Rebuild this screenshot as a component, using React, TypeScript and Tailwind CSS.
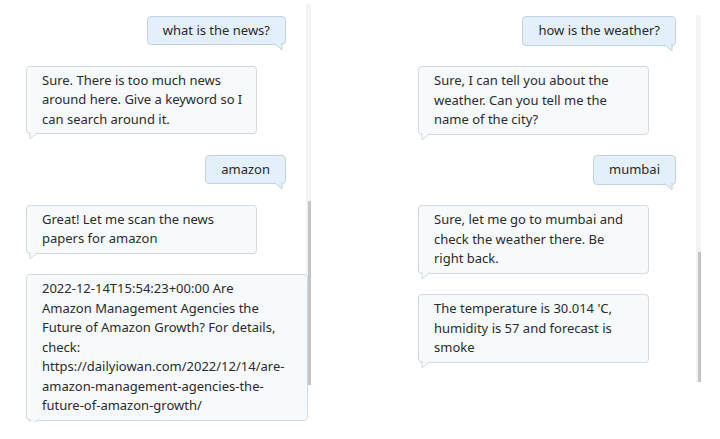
const font = { fontFamily: '"Noto Sans", "Open Sans", Arial, sans-serif' };

type Msg = { from: "user" | "bot"; text: string[]; wide?: boolean };

const newsChat: Msg[] = [
  { from: "user", text: ["what is the news?"] },
  { from: "bot", text: ["Sure. There is too much news", "around here. Give a keyword so I", "can search around it."] },
  { from: "user", text: ["amazon"] },
  { from: "bot", text: ["Great! Let me scan the news", "papers for amazon"] },
  {
    from: "bot",
    wide: true,
    text: [
      "2022-12-14T15:54:23+00:00 Are",
      "Amazon Management Agencies the",
      "Future of Amazon Growth? For details,",
      "check:",
      "https://dailyiowan.com/2022/12/14/are-",
      "amazon-management-agencies-the-",
      "future-of-amazon-growth/",
    ],
  },
];

const weatherChat: Msg[] = [
  { from: "user", text: ["how is the weather?"] },
  { from: "bot", text: ["Sure, I can tell you about the", "weather. Can you tell me the", "name of the city?"] },
  { from: "user", text: ["mumbai"] },
  { from: "bot", text: ["Sure, let me go to mumbai and", "check the weather there. Be", "right back."] },
  { from: "bot", text: ["The temperature is 30.014 'C,", "humidity is 57 and forecast is", "smoke"] },
];

function Tail({ side }: { side: "user" | "bot" }) {
  if (side === "user") {
    return (
      <svg className="absolute -bottom-[7px] right-[1px]" width="10" height="8" viewBox="0 0 10 8">
        <path d="M0 0 L8 7 L8 0 Z" fill="#e3effa" />
        <path d="M0.5 0.5 L8 7 L8 0" fill="none" stroke="#c5d3df" strokeWidth="1" />
      </svg>
    );
  }
  return (
    <svg className="absolute -bottom-[7px] left-[2px]" width="10" height="8" viewBox="0 0 10 8">
      <path d="M1 0 L1 7 L9 0 Z" fill="#f7fafc" />
      <path d="M1 0 L1 7 L9 0.5" fill="none" stroke="#d3d9de" strokeWidth="1" />
    </svg>
  );
}

function Bubble({ msg }: { msg: Msg }) {
  const isUser = msg.from === "user";
  return (
    <div className={isUser ? "flex justify-end pr-[22px]" : "flex justify-start"}>
      <div
        className={
          "relative rounded-[4px] border px-[15px] py-[4px] text-[13px] leading-[19.5px] text-[#2b2b2b] " +
          (isUser
            ? "bg-[#e3effa] border-[#c5d3df]"
            : msg.wide
            ? "w-[283px] bg-[#f7fafc] border-[#d3d9de]"
            : "w-[231px] bg-[#f7fafc] border-[#d3d9de]")
        }
      >
        {msg.text.map((line, i) => (
          <div key={i} className="whitespace-nowrap">
            {line}
          </div>
        ))}
        <Tail side={msg.from} />
      </div>
    </div>
  );
}

function Scrollbar({ top, height, thumb }: { top: string; height: string; thumb: string }) {
  return (
    <div className={"flex w-[5px] flex-col justify-end bg-[#f3f3f3] " + top + " " + height}>
      <div className={"w-[3px] self-end bg-[#c4c4c4] " + thumb} />
    </div>
  );
}

export default function App() {
  return (
    <div className="flex h-[439px] w-[720px] overflow-hidden bg-white" style={font}>
      <div className="flex w-[312px] shrink-0 pl-[26px]">
        <div className="flex h-[422px] w-[282px] flex-col gap-[20.5px] overflow-hidden pt-[15.5px]">
          {newsChat.map((m, i) => (
            <Bubble key={i} msg={m} />
          ))}
        </div>
        <div className="-ml-[2px] flex">
          <Scrollbar top="mt-[4px]" height="h-[381px]" thumb="h-[184px]" />
        </div>
      </div>
      <div className="flex w-[408px] shrink-0 pl-[106px]">
        <div className="flex w-[280px] flex-col gap-[20.5px] pt-[16px]">
          {weatherChat.map((m, i) => (
            <Bubble key={i} msg={m} />
          ))}
        </div>
        <div className="-ml-[2px] flex">
          <Scrollbar top="mt-[15px]" height="h-[367px]" thumb="h-[130px]" />
        </div>
      </div>
    </div>
  );
}
